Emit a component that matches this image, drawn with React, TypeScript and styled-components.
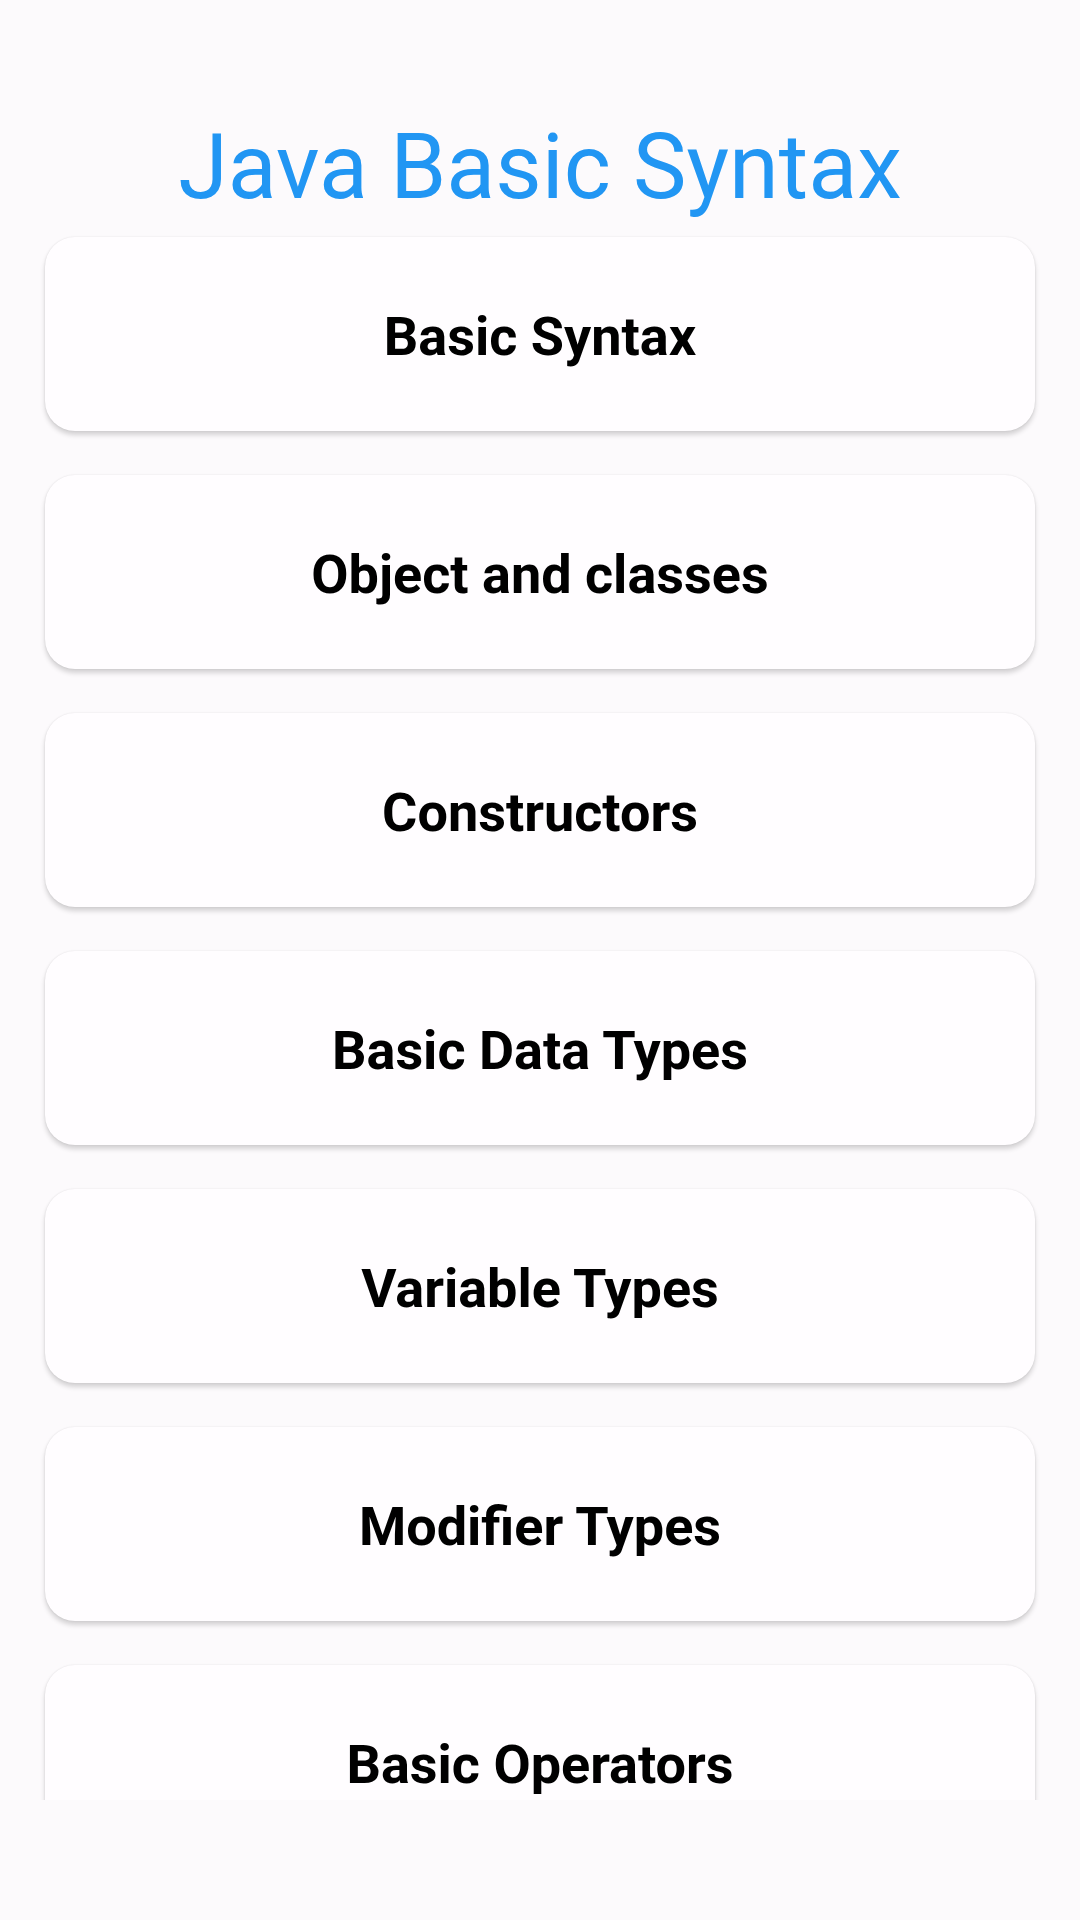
import React from "react";
import styled, { createGlobalStyle } from "styled-components";

const GlobalStyle = createGlobalStyle`
  html, body {
    margin: 0;
    padding: 0;
    background: #fcfafc;
  }
  * { box-sizing: border-box; }
`;

const Screen = styled.div`
  width: 1080px;
  height: 1920px;
  display: flex;
  flex-direction: column;
  background: #fcfafc;
  font-family: Roboto, "Noto Sans", sans-serif;
`;

const Viewport = styled.div`
  height: 1800px;
  overflow: hidden;
  display: flex;
  flex-direction: column;
`;

const BottomSpace = styled.div`
  height: 120px;
  background: #fcfafc;
`;

const Header = styled.h1`
  margin: 0;
  padding-top: 115px;
  padding-bottom: 17px;
  text-align: center;
  font-family: Roboto, sans-serif;
  font-weight: 400;
  font-size: 90px;
  line-height: normal;
  color: #2196f3;
`;

const List = styled.div`
  display: flex;
  flex-direction: column;
  gap: 44px;
  padding: 0 45px 40px;
`;

const Card = styled.div`
  flex: none;
  height: 194px;
  padding-top: 5px;
  border-radius: 30px;
  background: #fffdff;
  box-shadow: 0 4px 5px rgba(0, 0, 0, 0.16), 0 0 2px rgba(0, 0, 0, 0.1);
  display: flex;
  align-items: center;
  justify-content: center;
`;

const CardLabel = styled.span`
  font-family: Roboto, sans-serif;
  font-weight: 700;
  font-size: 54px;
  color: #000;
`;

const topics = [
  "Basic Syntax",
  "Object and classes",
  "Constructors",
  "Basic Data Types",
  "Variable Types",
  "Modifier Types",
  "Basic Operators",
];

export default function App() {
  return (
    <>
      <GlobalStyle />
      <Screen>
        <Viewport>
          <Header>Java Basic Syntax</Header>
          <List>
            {topics.map((t) => (
              <Card key={t}>
                <CardLabel>{t}</CardLabel>
              </Card>
            ))}
          </List>
        </Viewport>
        <BottomSpace />
      </Screen>
    </>
  );
}
